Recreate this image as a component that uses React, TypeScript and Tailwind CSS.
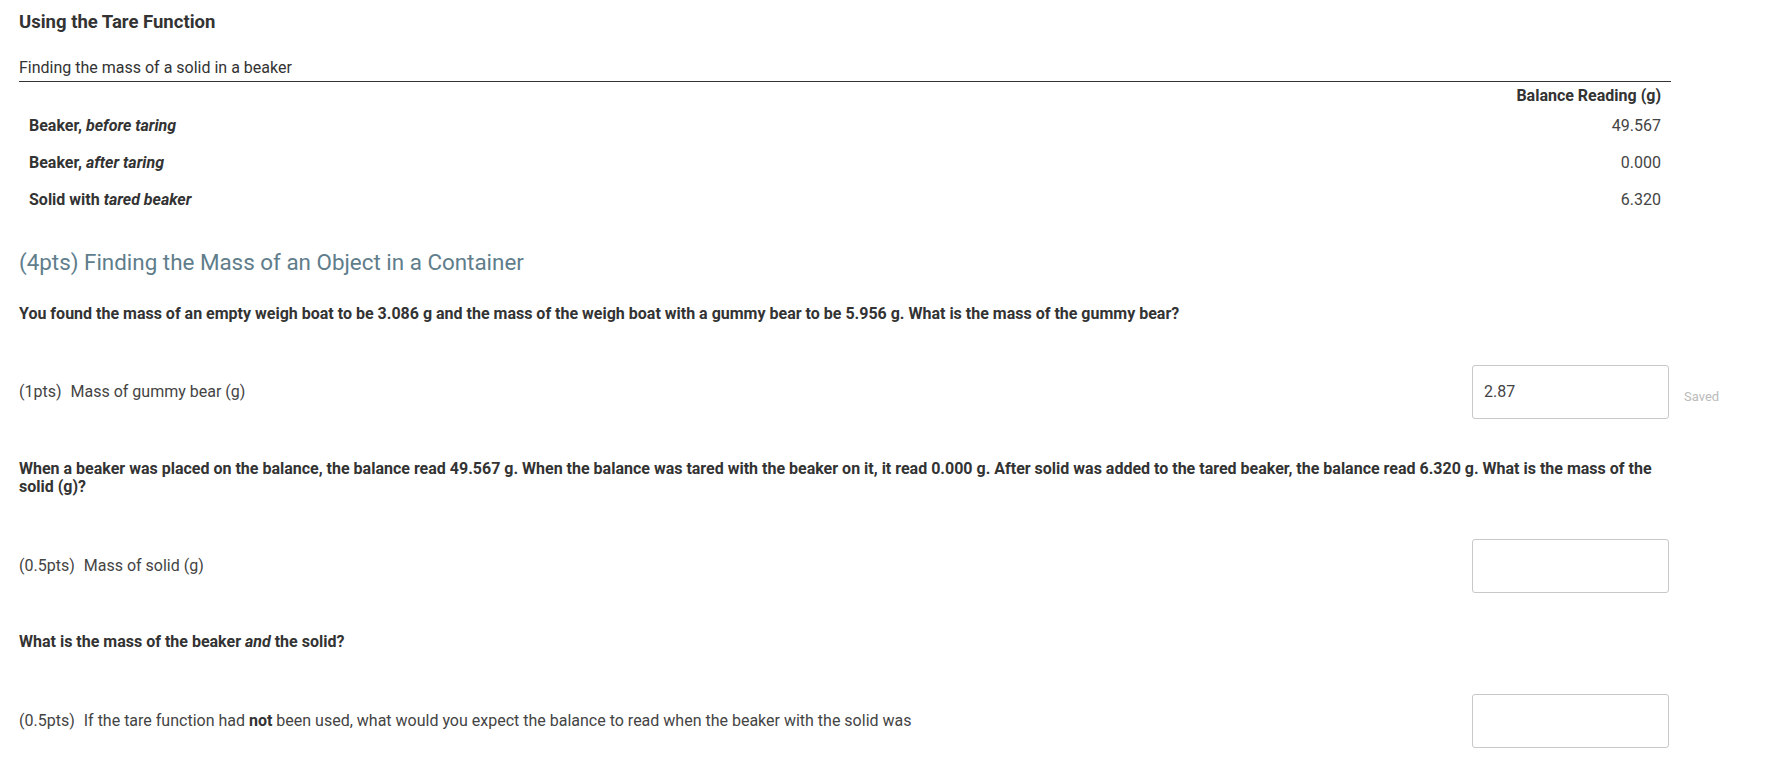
import React from "react";

function AnswerRow({ pts, children, value, saved }: { pts: string; children: React.ReactNode; value?: string; saved?: boolean }) {
  return (
    <div className="flex items-center w-[1760px]">
      <div className="flex-1 text-[16px] text-[#444] leading-[20px]">
        <span>({pts})</span>
        <span className="ml-[9px]">{children}</span>
      </div>
      <div className="w-[197px] h-[54px] border border-[#c8c8c8] rounded-[3px] flex items-center pl-[11px] text-[16px] text-[#444] mr-[5px] bg-white">
        {value}
      </div>
      <div className="w-[105px] pl-[10px] text-[13px] text-[#bbb] pt-[9px]">{saved ? "Saved" : ""}</div>
    </div>
  );
}

export default function App() {
  return (
    <div className="min-h-[767px] bg-white pl-[19px] pt-[11px] font-['Roboto',sans-serif] text-[#333]">
      <div className="w-[1652px]">
        <div className="text-[18.5px] font-bold leading-[22px] text-[#333]">Using the Tare Function</div>
        <div className="mt-[25px] text-[16px] leading-[20px] text-[#333] pb-[3px] border-b border-[#333]">
          Finding the mass of a solid in a beaker
        </div>
        <table className="mt-[3px] w-full border-collapse text-[16px] leading-[20px]">
          <thead>
            <tr className="h-[22px]">
              <th></th>
              <th className="text-right font-bold px-[10px] text-[#333]">Balance Reading (g)</th>
            </tr>
          </thead>
          <tbody>
            <tr className="h-[37px]">
              <td className="px-[10px] font-bold text-[#333]">Beaker, <em>before taring</em></td>
              <td className="px-[10px] text-right text-[#444]">49.567</td>
            </tr>
            <tr className="h-[37px]">
              <td className="px-[10px] font-bold text-[#333]">Beaker, <em>after taring</em></td>
              <td className="px-[10px] text-right text-[#444]">0.000</td>
            </tr>
            <tr className="h-[37px]">
              <td className="px-[10px] font-bold text-[#333]">Solid with <em>tared beaker</em></td>
              <td className="px-[10px] text-right text-[#444]">6.320</td>
            </tr>
          </tbody>
        </table>
        <div className="mt-[31px] text-[22.4px] leading-[26px] text-[#607d8b]">
          (4pts) Finding the Mass of an Object in a Container
        </div>
        <div className="mt-[30px] text-[16px] font-bold leading-[18px] text-[#333]">
          You found the mass of an empty weigh boat to be 3.086 g and the mass of the weigh boat with a gummy bear to be 5.956 g. What is the mass of the gummy bear?
        </div>
      </div>
      <div className="mt-[42px]">
        <AnswerRow pts="1pts" value="2.87" saved>Mass of gummy bear (g)</AnswerRow>
      </div>
      <div className="w-[1652px] mt-[41px] text-[16px] font-bold leading-[18px] text-[#333]">
        When a beaker was placed on the balance, the balance read 49.567 g. When the balance was tared with the beaker on it, it read 0.000 g. After solid was added to the tared beaker, the balance read 6.320 g. What is the mass of the solid (g)?
      </div>
      <div className="mt-[43px]">
        <AnswerRow pts="0.5pts">Mass of solid (g)</AnswerRow>
      </div>
      <div className="w-[1652px] mt-[40px] text-[16px] font-bold leading-[18px] text-[#333]">
        What is the mass of the beaker <em>and</em> the solid?
      </div>
      <div className="mt-[43px]">
        <AnswerRow pts="0.5pts">
          If the tare function had <strong className="text-[#333]">not</strong> been used, what would you expect the balance to read when the beaker with the solid was
        </AnswerRow>
      </div>
    </div>
  );
}
